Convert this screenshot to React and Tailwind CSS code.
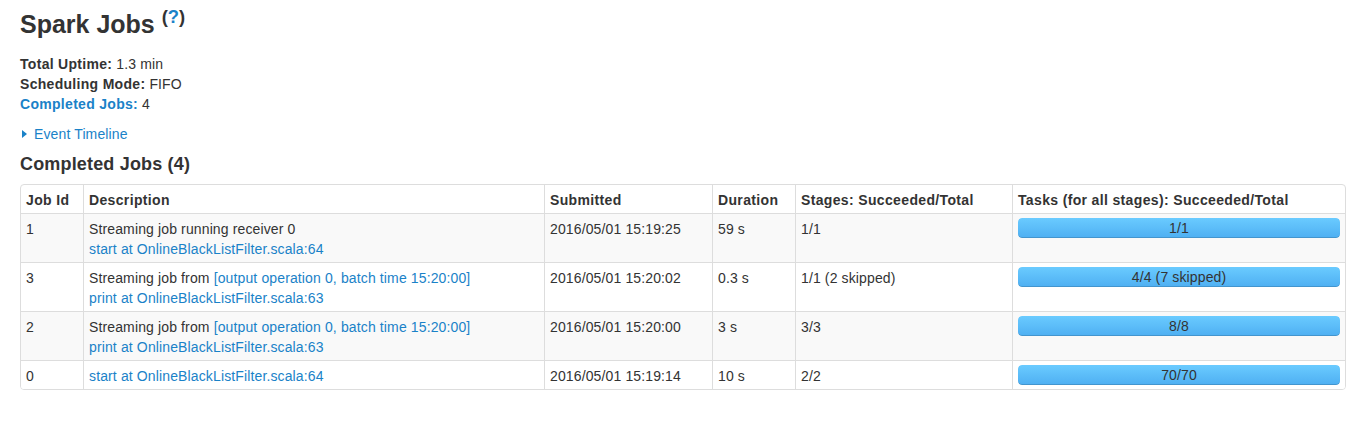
import React from "react";

const LINK = "text-[#1a82c8]";

function Bar({ label }) {
  return (
    <div className="relative h-[20px] w-full rounded-[4px] bg-[#f7f7f7] overflow-hidden">
      <div className="absolute inset-0 rounded-[4px] bg-gradient-to-b from-[#6acbff] to-[#4eaff2] shadow-[inset_0_-1px_0_rgba(0,0,0,0.15)]" />
      <span className="absolute inset-0 text-center leading-[20px] text-[#333]">{label}</span>
    </div>
  );
}

const rows = [
  {
    id: "1",
    desc: <span>Streaming job running receiver 0</span>,
    link: "start at OnlineBlackListFilter.scala:64",
    submitted: "2016/05/01 15:19:25",
    duration: "59 s",
    stages: "1/1",
    tasks: "1/1",
  },
  {
    id: "3",
    desc: (
      <span>
        Streaming job from <span className={LINK}>[output operation 0, batch time 15:20:00]</span>
      </span>
    ),
    link: "print at OnlineBlackListFilter.scala:63",
    submitted: "2016/05/01 15:20:02",
    duration: "0.3 s",
    stages: "1/1 (2 skipped)",
    tasks: "4/4 (7 skipped)",
  },
  {
    id: "2",
    desc: (
      <span>
        Streaming job from <span className={LINK}>[output operation 0, batch time 15:20:00]</span>
      </span>
    ),
    link: "print at OnlineBlackListFilter.scala:63",
    submitted: "2016/05/01 15:20:00",
    duration: "3 s",
    stages: "3/3",
    tasks: "8/8",
  },
  {
    id: "0",
    desc: null,
    link: "start at OnlineBlackListFilter.scala:64",
    submitted: "2016/05/01 15:19:14",
    duration: "10 s",
    stages: "2/2",
    tasks: "70/70",
  },
];

export default function App() {
  const th =
    "text-left font-bold tracking-[0.35px] px-[5px] pt-[5px] pb-[3px] leading-[20px] align-top border-l border-[#ddd]";
  const td = "px-[5px] pt-[5px] pb-[3px] leading-[20px] align-top border-l border-t border-[#ddd]";
  return (
    <div
      className="bg-white min-h-[421px] pl-[20px] text-[14px] leading-[20px] tracking-[0.13px] text-[#333]"
      style={{ fontFamily: '"Liberation Sans", Arial, sans-serif' }}
    >
      <div className="pt-[4px]">
        <h3 className="text-[25px] leading-[40px] font-bold tracking-normal m-0">
          Spark Jobs{" "}
          <span className="text-[18.4px] leading-none align-[10px] font-bold">
            (<span className={LINK}>?</span>)
          </span>
        </h3>
      </div>
      <ul className="mt-[10px] mb-[10px] list-none p-0">
        <li>
          <strong className="tracking-[0.3px]">Total Uptime:</strong> 1.3 min
        </li>
        <li>
          <strong className="tracking-[0.3px]">Scheduling Mode:</strong> FIFO
        </li>
        <li>
          <span className={`font-bold tracking-[0.3px] ${LINK}`}>Completed Jobs:</span> 4
        </li>
      </ul>
      <div className="flex items-center h-[20px]">
        <span className="inline-block w-0 h-0 border-l-[5px] border-l-[#1a82c8] border-y-[4px] border-y-transparent ml-[2px] mr-[7px]" />
        <span className={LINK}>Event Timeline</span>
      </div>
      <h4 className="mt-[10px] mb-[10px] text-[18px] leading-[20px] font-bold tracking-[0.17px]">
        Completed Jobs (4)
      </h4>
      <div className="w-[1326px] border border-[#ddd] rounded-[4px] overflow-hidden">
        <table className="w-full table-fixed border-separate border-spacing-0">
          <colgroup>
            <col className="w-[62px]" />
            <col className="w-[461px]" />
            <col className="w-[168px]" />
            <col className="w-[83px]" />
            <col className="w-[217px]" />
            <col className="w-[333px]" />
          </colgroup>
          <thead>
            <tr>
              <th className={`${th} border-l-0`}>Job Id</th>
              <th className={th}>Description</th>
              <th className={th}>Submitted</th>
              <th className={th}>Duration</th>
              <th className={th}>Stages: Succeeded/Total</th>
              <th className={th}>Tasks (for all stages): Succeeded/Total</th>
            </tr>
          </thead>
          <tbody>
            {rows.map((r, i) => (
              <tr key={r.id} className={i % 2 === 0 ? "bg-[#f9f9f9]" : "bg-white"}>
                <td className={`${td} border-l-0`}>{r.id}</td>
                <td className={td}>
                  {r.desc && <div>{r.desc}</div>}
                  <div className={LINK}>{r.link}</div>
                </td>
                <td className={td}>{r.submitted}</td>
                <td className={td}>{r.duration}</td>
                <td className={td}>{r.stages}</td>
                <td className="px-[5px] pt-[4px] pb-[4px] leading-[20px] align-top border-l border-t border-[#ddd]">
                  <Bar label={r.tasks} />
                </td>
              </tr>
            ))}
          </tbody>
        </table>
      </div>
    </div>
  );
}
